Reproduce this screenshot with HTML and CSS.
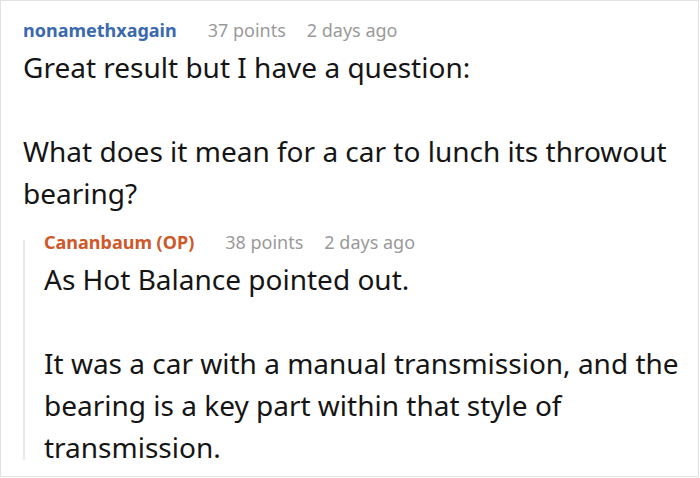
FILE: index.html
```html
<!DOCTYPE html>
<html>
<head>
<meta charset="utf-8">
<link rel="stylesheet" href="styles.css">
</head>
<body>
<div class="frame">
  <div class="comment">
    <div class="meta">
      <span class="author author-blue">nonamethxagain</span>
      <span class="info">37 points</span>
      <span class="info">2 days ago</span>
    </div>
    <div class="text">
      <p>Great result but I have a question:</p>
      <p>What does it mean for a car to lunch its throwout bearing?</p>
    </div>
  </div>
  <div class="reply">
    <div class="meta meta-reply">
      <span class="author author-op">Cananbaum (OP)</span>
      <span class="info">38 points</span>
      <span class="info">2 days ago</span>
    </div>
    <div class="text">
      <p>As Hot Balance pointed out.</p>
      <p class="last">It was a car with a manual transmission, and the bearing is a key part within that style of transmission.</p>
    </div>
  </div>
</div>
</body>
</html>
```

FILE: styles.css
```css
html, body {
  margin: 0;
  padding: 0;
  background: #fff;
}
.frame {
  box-sizing: border-box;
  width: 699px;
  height: 477px;
  border: 1px solid #e2e2e2;
  padding: 17px 0 0 22px;
  overflow: hidden;
  font-family: "Noto Sans", "Open Sans", sans-serif;
  color: #151515;
}
.meta {
  display: flex;
  gap: 21px;
  font-size: 18px;
  line-height: 24px;
  margin-bottom: 4px;
}
.author {
  font-weight: 700;
  margin-right: 10px;
}
.author-blue { color: #3a69ae; }
.author-op { color: #cf582b; }
.info { color: #9a9a9a; }
.text {
  font-size: 28px;
  line-height: 42px;
}
.text p {
  margin: 0 0 42px;
}
.text p:last-child {
  margin-bottom: 0;
}
.reply {
  display: flex;
  flex-direction: column;
  margin-top: 26px;
  border-left: 2px solid #e9e9e9;
  padding-left: 19px;
}
.meta-reply {
  margin-top: -10px;
}
.reply .text p.last {
  margin-bottom: -8px;
}
```
